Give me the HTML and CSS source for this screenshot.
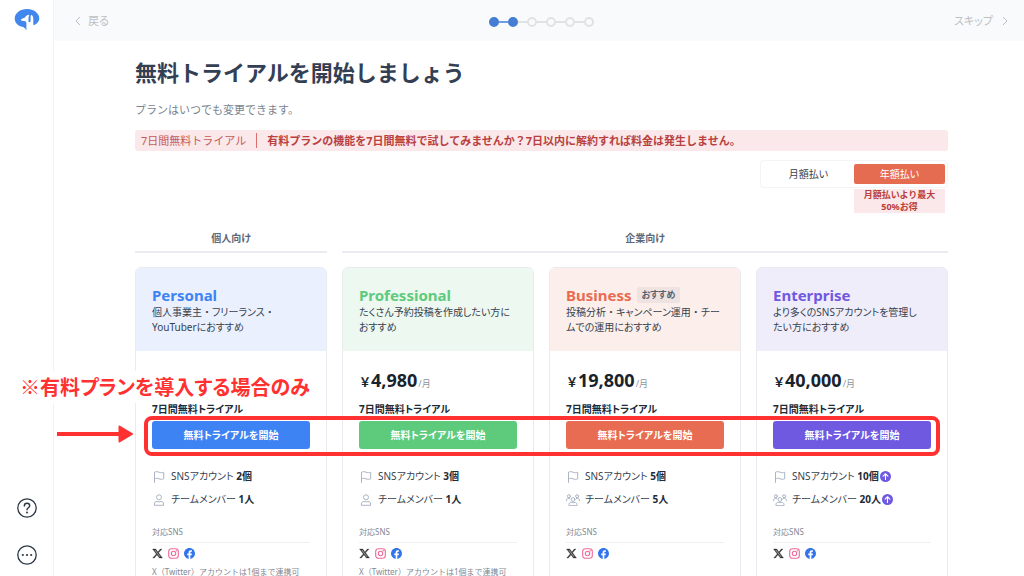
FILE: index.html
```html
<!DOCTYPE html>
<html lang="ja">
<head>
<meta charset="utf-8">
<meta name="viewport" content="width=device-width, initial-scale=1">
<title>無料トライアルを開始しましょう</title>
<link rel="stylesheet" href="styles.css">
</head>
<body>
<svg class="sprite" aria-hidden="true">
  <symbol id="i-flag" viewBox="0 0 12 12"><path d="M1.5 11.5V1.2c1.6-.7 3-.7 4.500 0s3 .7 4.700 0v6.600c-1.700.7-3.200.7-4.700 0s-2.900-.7-4.500 0" fill="none" stroke="currentColor" stroke-linejoin="round" stroke-linecap="round" stroke-width=".9"/></symbol>
  <symbol id="i-user" viewBox="0 0 12 12"><g fill="none" stroke="currentColor" stroke-width=".9"><circle cx="6" cy="3.300" r="2.500"/><path d="M1.400 11.300V10c0-1.700 1.100-2.500 2.600-2.500.8 0 1 .4 2 .4s1.200-.4 2-.4c1.500 0 2.600.8 2.600 2.500v1.300z" stroke-linejoin="round"/></g></symbol>
  <symbol id="i-users" viewBox="0 0 14 12"><g fill="none" stroke="currentColor" stroke-width=".9" stroke-linecap="round" stroke-linejoin="round"><circle cx="7" cy="5.500" r="1.900"/><circle cx="2.900" cy="2.200" r="1.500"/><circle cx="11.100" cy="2.200" r="1.500"/><path d="M3 11.300v-.8c0-1.400 1-2.100 2.200-2.100.7 0 1 .3 1.800.3s1.100-.3 1.800-.3c1.200 0 2.200.7 2.200 2.100v.8zM.6 6.800V6c0-1.100.7-1.600 1.600-1.600.6 0 .8.200 1.400.2M13.400 6.800V6c0-1.100-.7-1.600-1.600-1.600-.6 0-.8.200-1.400.2"/></g></symbol>
  <symbol id="i-x" viewBox="0 0 24 24"><path fill="currentColor" stroke="currentColor" stroke-width=".8" d="M18.244 2.250h3.308l-7.227 8.260 8.502 11.240H16.170l-5.214-6.817L4.990 21.750H1.680l7.730-8.835L1.254 2.250H8.080l4.713 6.231zm-1.161 17.520h1.833L7.084 4.126H5.117z"/></symbol>
  <symbol id="i-insta" viewBox="0 0 24 24"><g fill="none" stroke="currentColor" stroke-width="2.400"><rect x="1.500" y="1.500" width="21" height="21" rx="6"/><circle cx="12" cy="12" r="4.800"/></g><circle cx="18" cy="6" r="1.500" fill="currentColor"/></symbol>
  <symbol id="i-fb" viewBox="0 0 24 24"><path fill="currentColor" d="M24 12.073C24 5.405 18.627 0 12 0S0 5.405 0 12.073c0 6.026 4.388 11.020 10.125 11.927v-8.437H7.078v-3.490h3.047V9.413c0-3.026 1.792-4.697 4.533-4.697 1.312 0 2.686.236 2.686.236v2.970h-1.513c-1.491 0-1.956.93-1.956 1.886v2.265h3.328l-.532 3.490h-2.796V24C19.612 23.093 24 18.099 24 12.073z"/></symbol>
  <symbol id="i-up" viewBox="0 0 12 12"><circle cx="6" cy="6" r="6" fill="currentColor"/><path d="M6 9.200V3.200M3.400 5.600 6 3l2.600 2.600" fill="none" stroke="#fff" stroke-width="1.200" stroke-linecap="round" stroke-linejoin="round"/></symbol>
</svg>

<div class="app">
  <aside class="sidebar">
    <a class="logo" href="#" aria-label="ホーム">
      <svg viewBox="0 0 26 24"><path fill="#4187ee" d="M13 1C6.200 1 .7 5.200.7 10.400c0 4.300 3.400 7.300 7.700 8.400 1.600.4 2.900 1.700 4 3.700v-7.300c0-1.200-.8-1.900-2.200-2.100l-2.400-.3c-1-.2-1.200-1.300-.3-1.800L11 9.400c1-1.700 2.300-2.700 4.300-2.700-.6 1.100-.8 2.300-.8 3.800v2.400c0 .8.400 1.300 1 1.300s1.100-.5 1.100-1.300V8.400c0-.9.4-1.500 1-1.500 1 .5 1.700 2 1.700 4v5.600c0 .5.300.8.800.6 3.100-1.500 5.200-3.900 5.200-6.700C25.300 5.200 19.800 1 13 1z"/></svg>
    </a>
    <div class="side-tools">
      <button class="side-button" type="button" aria-label="ヘルプ">
        <svg viewBox="0 0 20 20"><g fill="none" stroke="currentColor" stroke-linecap="round"><circle cx="10" cy="10" r="9.200" stroke-width="1.300"/><path d="M7.300 8c0-1.700 1.100-2.700 2.700-2.700s2.700 1 2.700 2.400c0 2-2.700 2.100-2.700 4.100" stroke-width="1.400"/></g><circle cx="10" cy="14.500" r="1" fill="currentColor"/></svg>
      </button>
      <button class="side-button" type="button" aria-label="メニュー">
        <svg viewBox="0 0 20 20"><circle cx="10" cy="10" r="9.200" fill="none" stroke="currentColor" stroke-width="1.300"/><g fill="currentColor"><circle cx="5.800" cy="10" r="1.100"/><circle cx="10" cy="10" r="1.100"/><circle cx="14.200" cy="10" r="1.100"/></g></svg>
      </button>
    </div>
  </aside>

  <div class="page">
    <header class="topbar">
      <a class="nav-link" href="#"><svg class="chevron" viewBox="0 0 6 10"><path d="M5 1 1 5l4 4" fill="none" stroke="currentColor"/></svg>戻る</a>
      <ol class="steps" aria-label="進行状況">
        <li class="step done"></li><li class="step done"></li><li class="step"></li><li class="step"></li><li class="step"></li><li class="step"></li>
      </ol>
      <a class="nav-link next" href="#">スキップ<svg class="chevron" viewBox="0 0 6 10"><path d="m1 1 4 4-4 4" fill="none" stroke="currentColor"/></svg></a>
    </header>

    <main class="content">
      <h1 class="title">無料トライアルを開始しましょう</h1>
      <p class="lead">プランはいつでも変更できます。</p>
      <div class="banner">
        <span class="banner-label">7日間無料トライアル</span>
        <strong>有料プランの機能を7日間無料で試してみませんか？7日以内に解約すれば料金は発生しません。</strong>
      </div>

      <div class="billing">
        <div class="toggle">
          <button class="toggle-option" type="button" aria-pressed="false">月額払い</button>
          <button class="toggle-option active" type="button" aria-pressed="true">年額払い</button>
        </div>
        <p class="discount">月額払いより最大<br>50%お得</p>
      </div>

      <div class="groups">
        <h2 class="group">個人向け</h2>
        <h2 class="group business-group">企業向け</h2>
      </div>

      <div class="plans">
        <section class="plan personal">
          <div class="plan-head">
            <h3 class="plan-name">Personal</h3>
            <p class="plan-desc">個人事業主<span class="dot">・</span>フリーランス<span class="dot">・</span><br>YouTuberにおすすめ</p>
          </div>
          <div class="plan-body">
            <p class="price"></p>
            <p class="trial">7日間無料トライアル</p>
            <button class="start" type="button">無料トライアルを開始</button>
            <ul class="features">
              <li class="feature"><svg class="feature-icon"><use href="#i-flag"/></svg><span>SNSアカウント <b>2個</b></span></li>
              <li class="feature"><svg class="feature-icon"><use href="#i-user"/></svg><span>チームメンバー <b>1人</b></span></li>
            </ul>
            <h4 class="sns-title">対応SNS</h4>
            <div class="sns"><svg><use href="#i-x"/></svg><svg class="insta"><use href="#i-insta"/></svg><svg class="fb"><use href="#i-fb"/></svg></div>
            <p class="note">X（Twitter）アカウントは1個まで連携可</p>
          </div>
        </section>

        <section class="plan professional">
          <div class="plan-head">
            <h3 class="plan-name">Professional</h3>
            <p class="plan-desc">たくさん予約投稿を作成したい方に<br>おすすめ</p>
          </div>
          <div class="plan-body">
            <p class="price"><span class="yen">￥</span>4,980<span class="per">/月</span></p>
            <p class="trial">7日間無料トライアル</p>
            <button class="start" type="button">無料トライアルを開始</button>
            <ul class="features">
              <li class="feature"><svg class="feature-icon"><use href="#i-flag"/></svg><span>SNSアカウント <b>3個</b></span></li>
              <li class="feature"><svg class="feature-icon"><use href="#i-user"/></svg><span>チームメンバー <b>1人</b></span></li>
            </ul>
            <h4 class="sns-title">対応SNS</h4>
            <div class="sns"><svg><use href="#i-x"/></svg><svg class="insta"><use href="#i-insta"/></svg><svg class="fb"><use href="#i-fb"/></svg></div>
            <p class="note">X（Twitter）アカウントは1個まで連携可</p>
          </div>
        </section>

        <section class="plan business">
          <div class="plan-head">
            <h3 class="plan-name">Business<span class="badge">おすすめ</span></h3>
            <p class="plan-desc">投稿分析<span class="dot">・</span>キャンペーン運用<span class="dot">・</span>チー<br>ムでの運用におすすめ</p>
          </div>
          <div class="plan-body">
            <p class="price"><span class="yen">￥</span>19,800<span class="per">/月</span></p>
            <p class="trial">7日間無料トライアル</p>
            <button class="start" type="button">無料トライアルを開始</button>
            <ul class="features">
              <li class="feature"><svg class="feature-icon"><use href="#i-flag"/></svg><span>SNSアカウント <b>5個</b></span></li>
              <li class="feature"><svg class="feature-icon"><use href="#i-users"/></svg><span>チームメンバー <b>5人</b></span></li>
            </ul>
            <h4 class="sns-title">対応SNS</h4>
            <div class="sns"><svg><use href="#i-x"/></svg><svg class="insta"><use href="#i-insta"/></svg><svg class="fb"><use href="#i-fb"/></svg></div>
          </div>
        </section>

        <section class="plan enterprise">
          <div class="plan-head">
            <h3 class="plan-name">Enterprise</h3>
            <p class="plan-desc">より多くのSNSアカウントを管理し<br>たい方におすすめ</p>
          </div>
          <div class="plan-body">
            <p class="price"><span class="yen">￥</span>40,000<span class="per">/月</span></p>
            <p class="trial">7日間無料トライアル</p>
            <button class="start" type="button">無料トライアルを開始</button>
            <ul class="features">
              <li class="feature"><svg class="feature-icon"><use href="#i-flag"/></svg><span>SNSアカウント <b>10個</b></span><svg class="up"><use href="#i-up"/></svg></li>
              <li class="feature"><svg class="feature-icon"><use href="#i-users"/></svg><span>チームメンバー <b>20人</b></span><svg class="up"><use href="#i-up"/></svg></li>
            </ul>
            <h4 class="sns-title">対応SNS</h4>
            <div class="sns"><svg><use href="#i-x"/></svg><svg class="insta"><use href="#i-insta"/></svg><svg class="fb"><use href="#i-fb"/></svg></div>
          </div>
        </section>

        <p class="callout-text">※有料プランを導入する場合のみ</p>
        <svg class="callout-arrow" viewBox="0 0 78 18" aria-hidden="true"><path d="M1 9h64" stroke="#ff3131" stroke-width="4"/><path d="M63.500 1.500 76 9l-12.500 7.500z" fill="#ff3131" stroke="#ff3131" stroke-width="2" stroke-linejoin="round"/></svg>
        <div class="callout-frame"></div>
      </div>
    </main>
  </div>
</div>
</body>
</html>
```

FILE: styles.css
```css
* { box-sizing: border-box; }

body, h1, h2, h3, h4, p, ul, ol { margin: 0; padding: 0; }
ul, ol { list-style: none; }

body {
  font-family: "Noto Sans", "Noto Sans CJK JP", sans-serif;
  font-size: 10px;
  line-height: 15px;
  color: #36424f;
  background: #fff;
  font-feature-settings: "palt";
}

button { font: inherit; font-feature-settings: inherit; border: 0; padding: 0; cursor: pointer; }
a { color: inherit; text-decoration: none; }
svg { display: block; flex: none; }
.sprite { display: none; }

.title, .lead, .banner, .discount, .dot, .yen, .note { font-feature-settings: normal; }

.app { display: flex; height: 100vh; overflow: hidden; }

.sidebar {
  display: flex;
  flex: none;
  flex-direction: column;
  justify-content: space-between;
  align-items: center;
  width: 54px;
  padding: 8px 0 11px;
  border-right: 1px solid #f1f3f6;
}
.logo svg { width: 26px; height: 24px; }
.side-tools { display: flex; flex-direction: column; gap: 27px; }
.side-button { width: 20px; height: 20px; background: none; color: #2b3745; }

.page { flex: 1; min-width: 0; }

.topbar {
  display: grid;
  grid-template-columns: 1fr auto 1fr;
  align-items: center;
  height: 41px;
  padding: 0 16px 0 21px;
  background: #f9fafc;
}
.nav-link { display: flex; align-items: center; gap: 7px; font-size: 11px; color: #bcbfc4; }
.nav-link.next { gap: 9px; justify-content: flex-end; }
.chevron { width: 6px; height: 10px; }

.steps { display: flex; gap: 9px; padding-top: 2px; }
.step {
  position: relative;
  width: 10px;
  height: 10px;
  border: 2px solid #e1e2e4;
  border-radius: 50%;
}
.step + .step::before {
  content: "";
  position: absolute;
  right: 8px;
  top: 2px;
  width: 9px;
  height: 2px;
  background: #e1e2e4;
}
.step.done { background: #447dd2; border-color: #447dd2; }
.step.done + .step.done::before { background: #6f9fe2; }

.content { padding: 15px 76px 0 81px; }
.title { font-size: 22px; line-height: 32px; color: #334054; }
.lead { margin-top: 14px; font-size: 11px; line-height: 16px; color: #7b8490; }

.banner {
  display: flex;
  align-items: center;
  gap: 10px;
  margin-top: 12px;
  padding: 3px 6px;
  border-radius: 3px;
  background: #fae8ea;
  color: #b9403f;
  font-size: 11px;
}
.banner-label { padding-right: 10px; border-right: 1px solid #d9706c; color: #c65a58; }

.billing { display: flex; flex-direction: column; align-items: flex-end; margin-top: 9px; }
.toggle {
  display: grid;
  grid-template-columns: 1fr 1fr;
  width: 188px;
  padding: 3px 2px;
  border: 1px solid #f3f4f6;
  border-radius: 4px;
}
.toggle-option { height: 20px; border-radius: 2px; background: #fff; color: #36424f; }
.toggle-option.active { background: #e56b51; color: #fff; }
.discount {
  width: 91px;
  margin: 1px 3px 0 0;
  background: #fae8ea;
  color: #b9403f;
  font-size: 9px;
  font-weight: 700;
  line-height: 12px;
  text-align: center;
}

.groups {
  display: grid;
  grid-template-columns: repeat(4, 1fr);
  gap: 15px;
  margin-top: 18px;
}
.group {
  padding-bottom: 5px;
  border-bottom: 2px solid #e9ebf0;
  color: #5c6877;
  font-size: 10px;
  text-align: center;
}
.business-group { grid-column: span 3; }

.plans {
  position: relative;
  display: grid;
  grid-template-columns: repeat(4, 1fr);
  gap: 15px;
  margin-top: 14px;
}
.plan { min-width: 0; border: 1px solid #e9ebf1; border-radius: 6px; overflow: hidden; }
.plan-head { padding: 18px 0 16px 16px; background: var(--tint); }
.plan-name {
  display: flex;
  align-items: center;
  gap: 5px;
  height: 18px;
  margin-bottom: 1px;
  color: var(--accent);
  font-size: 15px;
  line-height: 18px;
}
.plan-desc { white-space: nowrap; }
.badge {
  padding: 0 5px;
  border-radius: 2px;
  background: #efe3e1;
  color: #56616f;
  font-size: 9px;
  line-height: 16px;
}
.personal { --accent: #3e83f4; --tint: #eaf0fd; }
.professional { --accent: #5ecb7c; --tint: #edf8f0; }
.business { --accent: #e86c52; --tint: #fcefeb; }
.enterprise { --accent: #6f59e0; --tint: #f0edfb; }

.plan-body { padding: 17px 16px 30px; }
.price {
  height: 24px;
  color: #18232e;
  font-size: 18px;
  font-weight: 700;
  line-height: 24px;
}
.yen { font-size: 12px; }
.per { padding-left: 1px; color: #8e959e; font-size: 9px; font-weight: 400; }
.trial { margin-top: 10px; color: #202b37; font-weight: 700; }
.start {
  width: 100%;
  height: 28px;
  margin-top: 4px;
  border-radius: 3px;
  background: var(--accent);
  color: #fff;
  font-weight: 700;
}
.features { display: grid; gap: 8px; margin-top: 20px; }
.feature { display: flex; align-items: center; }
.feature b { color: #202b37; }
.feature-icon { width: 14px; height: 12px; margin-right: 5px; color: #a3adbd; }
.up { width: 11px; height: 11px; margin-left: 1px; color: #6f59e0; }
.sns-title {
  margin-top: 19px;
  padding-bottom: 4px;
  border-bottom: 1px solid #eff0f3;
  color: #7f8893;
  font-size: 8px;
  font-weight: 400;
  line-height: 12px;
}
.sns { display: flex; gap: 5px; margin-top: 5px; color: #333; }
.sns svg { width: 11px; height: 11px; }
.sns .insta { color: #ee6a9b; }
.sns .fb { color: #3274ec; }
.note { margin-top: 7px; color: #7f8893; font-size: 8px; line-height: 12px; white-space: nowrap; }

/* Annotation layer over the plan cards */
.callout-text {
  position: absolute;
  top: 104px;
  left: -121px;
  padding: 2px 6px;
  background: #fff;
  color: #ff3131;
  font-family: "Noto Sans CJK JP", sans-serif;
  font-size: 20px;
  font-weight: 700;
  line-height: 28px;
  white-space: nowrap;
}
.callout-arrow { position: absolute; top: 158px; left: -79px; width: 78px; height: 18px; }
.callout-frame {
  position: absolute;
  top: 149px;
  right: 8px;
  left: 9px;
  height: 40px;
  border: 4px solid #ff3131;
  border-radius: 8px;
  pointer-events: none;
}
```
